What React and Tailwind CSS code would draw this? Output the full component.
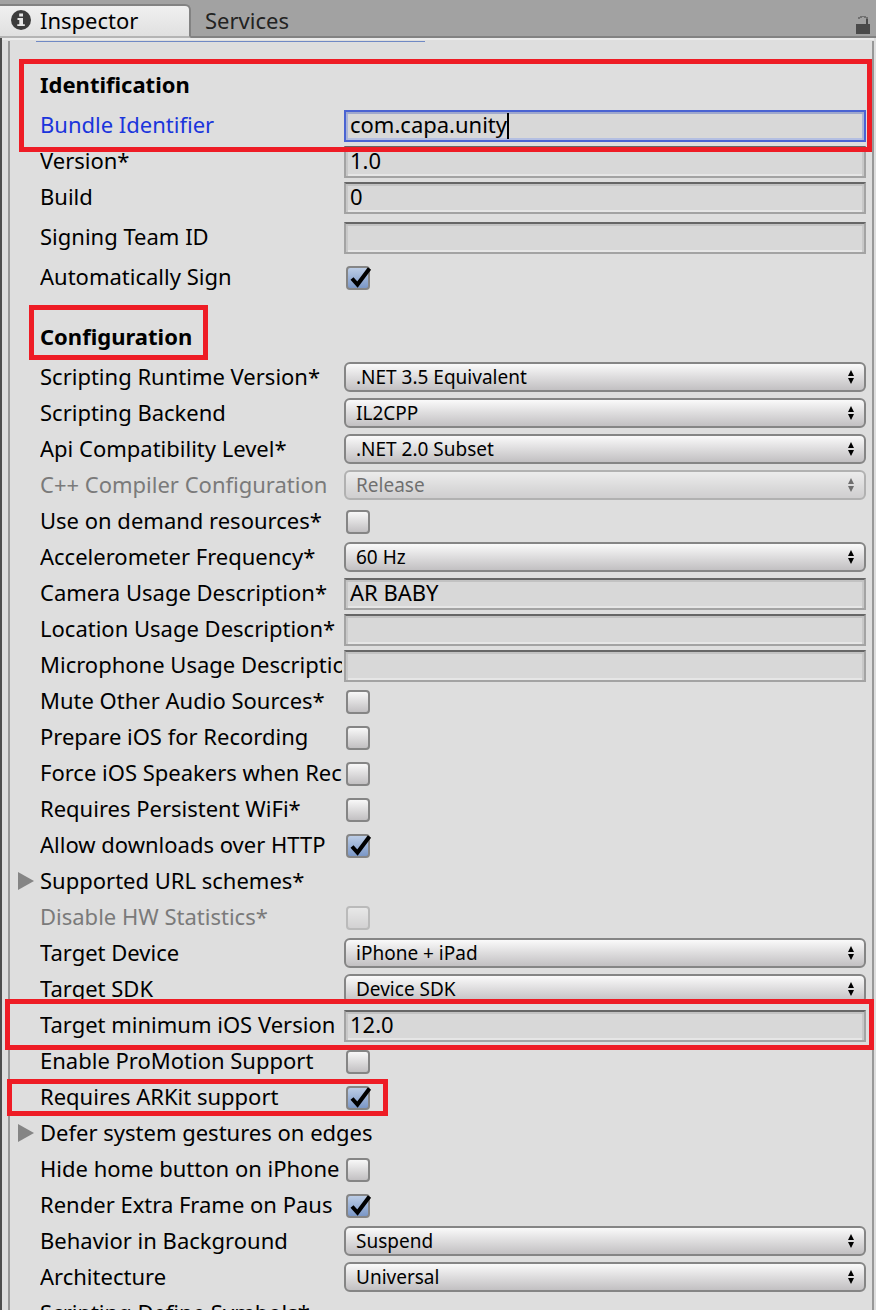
import { useId, useState } from "react";

const configRows = [
  { type: "select", label: "Scripting Runtime Version*", value: ".NET 3.5 Equivalent" },
  { type: "select", label: "Scripting Backend", value: "IL2CPP" },
  { type: "select", label: "Api Compatibility Level*", value: ".NET 2.0 Subset" },
  { type: "select", label: "C++ Compiler Configuration", value: "Release", disabled: true },
  { type: "checkbox", label: "Use on demand resources*" },
  { type: "select", label: "Accelerometer Frequency*", value: "60 Hz" },
  { type: "text", label: "Camera Usage Description*", value: "AR BABY" },
  { type: "text", label: "Location Usage Description*", value: "" },
  { type: "text", label: "Microphone Usage Descriptio", value: "" },
  { type: "checkbox", label: "Mute Other Audio Sources*" },
  { type: "checkbox", label: "Prepare iOS for Recording" },
  { type: "checkbox", label: "Force iOS Speakers when Rec" },
  { type: "checkbox", label: "Requires Persistent WiFi*" },
  { type: "checkbox", label: "Allow downloads over HTTP", checked: true },
  { type: "foldout", label: "Supported URL schemes*" },
  { type: "checkbox", label: "Disable HW Statistics*", disabled: true },
  { type: "select", label: "Target Device", value: "iPhone + iPad" },
  { type: "select", label: "Target SDK", value: "Device SDK" },
  { type: "text", label: "Target minimum iOS Version", value: "12.0", mark: "-left-[35px] -right-2 -top-[9px] h-[51px]" },
  { type: "checkbox", label: "Enable ProMotion Support" },
  { type: "checkbox", label: "Requires ARKit support", checked: true, mark: "-left-[33px] w-[381px] -top-px h-[37px]" },
  { type: "foldout", label: "Defer system gestures on edges" },
  { type: "checkbox", label: "Hide home button on iPhone" },
  { type: "checkbox", label: "Render Extra Frame on Paus", checked: true },
  { type: "select", label: "Behavior in Background", value: "Suspend" },
  { type: "select", label: "Architecture", value: "Universal" },
];

function Mark({ className }) {
  return <div className={`pointer-events-none absolute z-10 border-[5px] border-[#ee1c25] ${className}`} />;
}

function TextField({ id, value, active }) {
  const [text, setText] = useState(value);

  if (active) {
    return (
      <div className="mt-0.5 flex h-8 min-w-0 flex-1 items-center border-2 border-[#4a63d2] bg-[#d8d8d8] px-1 shadow-[inset_0_2px_0_#9fa8cd,inset_2px_0_0_#a9b3d8,inset_-2px_0_0_#a9b3d8,inset_0_-2px_0_#b4bfe2]">
        <input
          id={id}
          type="text"
          value={text}
          onChange={(e) => setText(e.target.value)}
          className="field-sizing-content h-7 pb-1 leading-6 outline-none"
        />
        <span className="h-[26px] w-0.5 bg-black" />
      </div>
    );
  }

  return (
    <input
      id={id}
      type="text"
      value={text}
      onChange={(e) => setText(e.target.value)}
      className="mt-0.5 h-8 min-w-0 flex-1 border-2 border-[#a3a3a3] border-t-[#666666] bg-[#d8d8d8] px-1 pb-1 leading-6 shadow-[inset_0_2px_0_#c2c2c2,inset_2px_0_0_#c8c8c8,inset_-2px_0_0_#c8c8c8,inset_0_-2px_0_#e6e6e6] outline-none"
    />
  );
}

function Popup({ id, value, disabled }) {
  return (
    <div className={`relative mt-0.5 h-[30px] min-w-0 flex-1 ${disabled ? "opacity-50" : ""}`}>
      <select
        id={id}
        disabled={disabled}
        defaultValue={value}
        className="block h-full w-full appearance-none rounded-md border-2 border-[#858585] bg-linear-to-b from-[#fafafa] to-[#c2c0c2] px-2.5 text-[19px] leading-6 text-black opacity-100 outline-none"
      >
        <option>{value}</option>
      </select>
      <svg viewBox="0 0 6 14" className="pointer-events-none absolute right-3 top-2 h-3.5 w-1.5">
        <path d="M3 0L6 6H0zM0 8H6L3 14z" />
      </svg>
    </div>
  );
}

function Toggle({ id, checked = false, disabled }) {
  const [on, setOn] = useState(checked);

  return (
    <div className={`relative ml-0.5 mt-1.5 size-6 ${disabled ? "opacity-40" : ""}`}>
      <input
        id={id}
        type="checkbox"
        checked={on}
        disabled={disabled}
        onChange={(e) => setOn(e.target.checked)}
        className="block size-6 appearance-none rounded-[4px] border-2 border-[#858585] bg-linear-to-b from-[#f8f8f8] to-[#c2c0c2] checked:from-[#bccde6] checked:to-[#7b97c6]"
      />
      {on && (
        <svg viewBox="0 0 26 24" className="pointer-events-none absolute left-0 top-0 h-6 w-[26px]">
          <path d="M6 12.5L11.5 18.5L23.5 2.5" fill="none" stroke="#000" strokeWidth="4" />
        </svg>
      )}
    </div>
  );
}

function Row({ row }) {
  const id = useId();

  if (row.type === "foldout") {
    return (
      <button type="button" className="-ml-[22px] flex h-9 items-start leading-8">
        <svg viewBox="0 0 16 18" className="mr-1.5 mt-2 h-[18px] w-4">
          <path d="M0 0L16 9L0 18z" fill="#858585" />
        </svg>
        {row.label}
      </button>
    );
  }

  return (
    <div className="relative flex h-9">
      <label
        htmlFor={id}
        className={`mr-0.5 w-[302px] shrink-0 overflow-hidden whitespace-nowrap leading-8 ${
          row.active ? "text-[#1a35dc]" : row.disabled ? "text-[#7a7a7a]" : ""
        }`}
      >
        {row.label}
      </label>
      {row.type === "text" && <TextField id={id} value={row.value} active={row.active} />}
      {row.type === "select" && <Popup id={id} value={row.value} disabled={row.disabled} />}
      {row.type === "checkbox" && <Toggle id={id} checked={row.checked} disabled={row.disabled} />}
      {row.mark && <Mark className={row.mark} />}
    </div>
  );
}

function TabBar() {
  return (
    <header className="flex h-[38px] shrink-0 items-end border-b-2 border-[#828282] bg-[#a2a2a2]">
      <button
        type="button"
        className="-mb-0.5 flex h-[34px] w-[191px] items-center rounded-tr-md border-r-2 border-t-2 border-b-2 border-[#828282] border-b-[#b4b4b4] bg-linear-to-b from-[#f0f0f0] to-[#e0e0e0] pb-0.5 pl-2.5"
      >
        <svg viewBox="0 0 22 22" className="mr-2 size-[22px]">
          <circle cx="11" cy="11" r="10" fill="#3c3c3c" />
          <path d="M9.2 4.5h3.8v3H9.2zM7.5 9h5.5v6.2h1.8v1.9H7.3v-1.9h2V11H7.5z" fill="#e8e8e8" />
        </svg>
        Inspector
      </button>
      <button type="button" className="h-8 px-3.5 text-[#222222]">
        Services
      </button>
      <svg viewBox="0 0 14 19" className="mb-0.5 ml-auto mr-1.5 h-[19px] w-3.5">
        <path d="M0 9H10V4H12V9H14V19H0z" fill="#4a4a4a" />
        <path d="M2 4V2H4V1H10V2H12V4H10V3H8V2H6V3H4V4z" fill="#707070" />
      </svg>
    </header>
  );
}

export default function App() {
  return (
    <div className="flex h-screen flex-col overflow-hidden bg-[#dedede] font-['Noto_Sans',sans-serif] text-[22px] text-black">
      <TabBar />
      <main className="flex min-h-0 flex-1 border-l-2 border-[#4d4d4d]">
        <div className="mr-0.5 min-w-0 flex-1 border-t-2 border-[#ececec]">
          <div className="ml-1.5 border-x-2 border-[#989898] pl-[30px] pr-1.5">
            <div className="-ml-1 mt-px mb-[26px] h-px w-[389px] bg-[#7089c4]" />

            <section>
              <div className="relative">
                <h2 className="mb-1 h-9 font-bold leading-8">Identification</h2>
                <Row row={{ type: "text", label: "Bundle Identifier", value: "com.capa.unity", active: true }} />
                <Mark className="-left-[21px] -right-1.5 -top-[9px] h-[93px]" />
              </div>
              <Row row={{ type: "text", label: "Version*", value: "1.0" }} />
              <Row row={{ type: "text", label: "Build", value: "0" }} />
              <div className="mt-1 flex flex-col gap-1">
                <Row row={{ type: "text", label: "Signing Team ID", value: "" }} />
                <Row row={{ type: "checkbox", label: "Automatically Sign", checked: true }} />
              </div>
            </section>

            <section className="mt-6">
              <h2 className="relative mb-1 h-9 font-bold leading-8">
                Configuration
                <Mark className="-left-[11px] -top-[15px] h-[55px] w-[179px]" />
              </h2>
              {configRows.map((row) => (
                <Row key={row.label} row={row} />
              ))}
              <h3 className="h-9 leading-8">Scripting Define Symbols*</h3>
            </section>
          </div>
        </div>
      </main>
    </div>
  );
}
